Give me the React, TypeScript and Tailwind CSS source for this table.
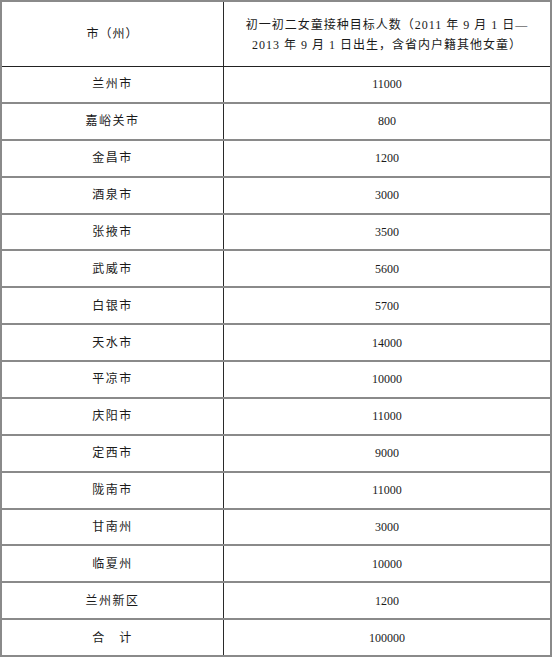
import React from "react";

const rows: [string, string][] = [
  ["兰州市", "11000"],
  ["嘉峪关市", "800"],
  ["金昌市", "1200"],
  ["酒泉市", "3000"],
  ["张掖市", "3500"],
  ["武威市", "5600"],
  ["白银市", "5700"],
  ["天水市", "14000"],
  ["平凉市", "10000"],
  ["庆阳市", "11000"],
  ["定西市", "9000"],
  ["陇南市", "11000"],
  ["甘南州", "3000"],
  ["临夏州", "10000"],
  ["兰州新区", "1200"],
  ["合\u3000计", "100000"],
];

export default function App() {
  return (
    <div
      className="w-[552px] h-[657px] bg-white border-2 border-[#8a8a8a] flex flex-col text-[12px] text-[#1a1a1a]"
      style={{ fontFamily: "'Liberation Serif', 'Noto Sans CJK SC', serif" }}
    >
      <div className="h-[65px] shrink-0 flex border-b border-[#222]">
        <div className="w-[222px] shrink-0 border-r border-[#2a2a2a] flex items-center justify-center tracking-[1px]">
          市（州）
        </div>
        <div className="flex-1 flex flex-col items-center justify-center leading-[20px] pt-[1px]">
          <div className="tracking-[1px]">初一初二女童接种目标人数（2011 年 9 月 1 日—</div>
          <div className="tracking-[1px]">2013 年 9 月 1 日出生，含省内户籍其他女童）</div>
        </div>
      </div>
      {rows.map(([city, num], i) => (
        <div
          key={i}
          className={
            i === 0
              ? "flex-1 flex min-h-0"
              : "flex-1 flex min-h-0 border-t-2 border-[#8a8a8a]"
          }
        >
          <div className="w-[222px] shrink-0 border-r border-[#2a2a2a] flex items-center justify-center tracking-[1.5px]">
            {city}
          </div>
          <div className="flex-1 flex items-center justify-center">{num}</div>
        </div>
      ))}
    </div>
  );
}
